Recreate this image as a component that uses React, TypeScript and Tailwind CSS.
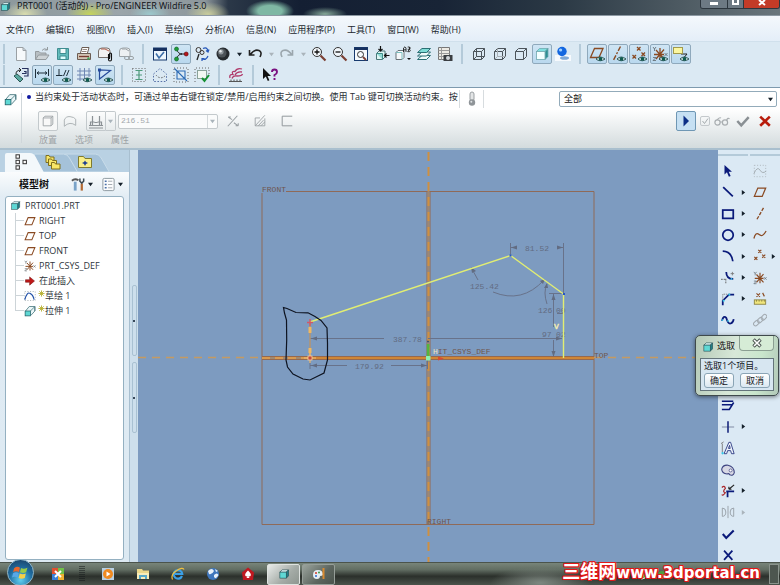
import React from 'react';
import clsx from 'clsx';

const navy = '#0a1a7a';
const brown = '#8a4a22';
const gray = '#9aa0a4';

const eye = (
  <g>
    <path d="M7 13 Q11 9 16 13 Q11 16.5 7 13Z" fill="#e8f4f2" stroke="#1d4a4a" strokeWidth="0.9" />
    <circle cx="11.5" cy="12.8" r="1.9" fill="#0f5a50" />
  </g>
);

const cube = (front: string, side: string) => (
  <g strokeWidth="0.8" stroke="#1f4a50">
    <path d="M2.5 5.5 L5.5 2.5 H14 L11 5.5Z" fill="#e9ffff" />
    <path d="M11 5.5 L14 2.5 V10.5 L11 13.5Z" fill={side} />
    <rect x="2.5" y="5.5" width="8.5" height="8" fill={front} />
  </g>
);

const wire = (
  <g fill="none" stroke="#4c545a">
    <path d="M2.5 5.5 H10.5 V13.5 H2.5Z M2.5 5.5 L5.5 2.5 H13.5 L10.5 5.5 M13.5 2.5 V10.5 L10.5 13.5" />
  </g>
);

const crosses = (
  <path d="M6 1 l3.5 3.5 m0 -3.5 l-3.5 3.5 M1.5 9 l3.5 3.5 m0 -3.5 l-3.5 3.5 M10.5 6.5 l3.5 3.5 m0 -3.5 l-3.5 3.5" fill="none" stroke={brown} strokeWidth="1.3" />
);

const csys = (
  <g fill="none" stroke={brown} strokeWidth="1.3">
    <path d="M2 8.5 H12 M8 2 V14 M4 4 L12 13 M12 3.5 L4 13" />
    <path d="M1 1 l1.5 2 l1.5 -2 M2.5 3 v2 M1 11.5 h3 l-3 3 h3 M12.5 7 l3 3 m0 -3 l-3 3" stroke="#5d646a" strokeWidth="0.8" />
  </g>
);

const icons: Record<string, React.ReactNode> = {
  cube: cube('#5fd8d4', '#1f7f86'),
  file: <path d="M3.5 1.5 H10 L13 4.5 V14.5 H3.5Z M10 1.5 V4.5 H13" fill="#f6f9fb" stroke={gray} />,
  open: (
    <g fill="#b8bfc3" stroke="#949b9f">
      <path d="M1.5 13.5 V5.5 H5 L6.5 7 H12 V9" />
      <path d="M1.5 13.5 L4.5 9 H15 L12 13.5Z" fill="#cdd3d6" />
      <path d="M8 4.5 Q10 1.5 13 3.5 M13.5 1 V4 H10.5" fill="none" />
    </g>
  ),
  save: (
    <g stroke="#3f8d90">
      <path d="M2.5 2.5 H13.5 V13.5 H2.5Z" fill="#62bcbc" />
      <path d="M5 2.5 H11 V7.5 H5Z" fill="#f1fbfb" />
      <path d="M5 10 H11 V13.5 H5Z" fill="#dff" />
    </g>
  ),
  print: (
    <g stroke="#6b5c52">
      <path d="M4.5 7 L6 1.5 H13 L11.5 7" fill="#fff" />
      <path d="M1.5 7.5 H14.5 V13.5 H1.5Z" fill="#d2c4b4" />
      <path d="M6.5 3.5 H11 M6 5.5 H10.5" strokeWidth="0.7" />
      <path d="M3 10.5 H13" stroke="#7b3c30" strokeWidth="1.3" />
      <circle cx="12.5" cy="12.5" r="1.2" fill="#3ba356" stroke="none" />
    </g>
  ),
  mailClip: (
    <g>
      <path d="M1.5 11.5 V5 Q1.5 2 5 2 H10 Q13 2 13 5 V11.5Z" fill="#f2f2f2" stroke="#77706c" />
      <path d="M4 3 Q8 2 12 5" stroke="#b05a48" fill="none" />
      <path d="M11.5 8 v5.5 a1.5 1.5 0 0 0 3 0 V8 a1 1 0 0 0 -2 0 v5" fill="none" stroke="#111" strokeWidth="1.1" />
    </g>
  ),
  mailLink: (
    <g fill="none" stroke="#9ba2a6">
      <path d="M1.5 10.5 V5 Q1.5 2 5 2 H9 Q12 2 12 5 V10.5Z" fill="#edf0f2" />
      <path d="M4 3 Q8 2 11 5" />
      <rect x="6.5" y="10.5" width="5" height="3" rx="1.5" />
      <rect x="10.5" y="10.5" width="5" height="3" rx="1.5" />
    </g>
  ),
  sketchWin: (
    <g>
      <rect x="1.5" y="2" width="13" height="12" fill="#eef6fd" stroke="#173a6e" />
      <path d="M1.5 2 H14.5 V5 H1.5Z" fill="#16305f" />
      <path d="M4 7.5 L7 12 L12 6" fill="none" stroke="#3d6ea8" strokeWidth="1.6" />
    </g>
  ),
  nodes: (
    <g>
      <path d="M3.5 3 Q5 8 9 8 Q5 8 3.5 13 M8 8 H13" fill="none" stroke="#222" />
      <circle cx="3.5" cy="3" r="2" fill="#1f9d3a" stroke="#0b5c1d" strokeWidth="0.6" />
      <circle cx="3.5" cy="13" r="2" fill="#1f9d3a" stroke="#0b5c1d" strokeWidth="0.6" />
      <circle cx="13.2" cy="8" r="2" fill="#b5161c" stroke="#600" strokeWidth="0.6" />
    </g>
  ),
  regen: (
    <g fill="none" stroke="#3a3430">
      <circle cx="4.5" cy="4" r="2.5" />
      <circle cx="8" cy="6.5" r="2" />
      <path d="M5 8 L3 14" stroke="#222" strokeWidth="1.3" />
      <path d="M9 2.5 Q13 0.5 14 5 M12 4.5 l2 1.5 l1 -2.5 M14 10 Q12 15 8 12.5 M8 15 v-2.5 h2.5" stroke="#2456b8" strokeWidth="1.2" />
    </g>
  ),
  ball: (
    <g>
      <circle cx="8" cy="8" r="6.5" fill="#24282c" />
      <circle cx="7" cy="7" r="4.5" fill="#4c5257" />
      <circle cx="6" cy="5.8" r="2.6" fill="#8e959a" />
      <circle cx="5.5" cy="5.2" r="1.2" fill="#e7eaec" />
    </g>
  ),
  undo: <path d="M3.5 8.5 Q7 3 12 4.5 Q15.5 6 13 11 M2.5 4 V9 H7.5" fill="none" stroke="#222" strokeWidth="1.6" />,
  redo: <path d="M12.5 8.5 Q9 3 4 4.5 Q0.5 6 3 11 M13.5 4 V9 H8.5" fill="none" stroke="#9ba6ad" strokeWidth="1.6" />,
  zoomIn: (
    <g fill="none">
      <circle cx="6" cy="6" r="4.5" stroke="#333" fill="#f2f7fb" />
      <path d="M3.5 6 H8.5 M6 3.5 V8.5" stroke="#111" strokeWidth="1.3" />
      <path d="M9.5 9.5 L14.5 14.5" stroke="#7a3f33" strokeWidth="2.2" />
    </g>
  ),
  zoomOut: (
    <g fill="none">
      <circle cx="6" cy="6" r="4.5" stroke="#333" fill="#f2f7fb" />
      <path d="M3.5 6 H8.5" stroke="#111" strokeWidth="1.3" />
      <path d="M9.5 9.5 L14.5 14.5" stroke="#7a3f33" strokeWidth="2.2" />
    </g>
  ),
  refit: (
    <g>
      <rect x="1.5" y="1.5" width="13" height="13" fill="#f5f9fc" stroke="#173a6e" />
      <path d="M1.5 1.5 H14.5 V4 H1.5Z" fill="#16305f" />
      <circle cx="7.5" cy="8.5" r="3" fill="none" stroke="#333" />
      <path d="M10 11 L13 14" stroke="#7a3f33" strokeWidth="1.8" />
    </g>
  ),
  reorient: (
    <g>
      <path d="M2.5 7.5 L5 5 H11 V11 L8.5 13.5 H2.5Z" fill="#dff6f4" stroke="#4b7779" />
      <path d="M2.5 7.5 H8.5 V13.5" fill="#8fdcd6" stroke="#3f8c88" />
      <path d="M6.5 0 V5 M4.5 3 L6.5 5 L8.5 3 M15.5 9.5 H10.5 M12.5 7.5 L10.5 9.5 L12.5 11.5" stroke="#111" fill="none" strokeWidth="1.2" />
    </g>
  ),
  views: (
    <g>
      <path d="M1 6.5 L3 4.5 H9 V11.5 L7 13.5 H1Z" fill="#f5f8fa" stroke="#687176" />
      <path d="M1 6.5 H7 V13.5" fill="none" stroke="#79bdbd" />
      <path d="M8.5 6 V2 L10 0.8 L11 2 V6 M8.5 3.8 H11 M12.7 1 H14.5 L15.3 2 L14.5 3.3 H12.7 M14.5 3.3 L15.3 4.5 L14.5 5.7 H12.7Z V1" fill="none" stroke="#222" strokeWidth="0.9" />
      <path d="M12 12 h4 l-2 2Z" fill="#111" />
    </g>
  ),
  layers: (
    <g stroke="#2b6f74" fill="#f1fbfb">
      <path d="M1.5 13.5 L6 9.5 H14.5 L10.5 13.5Z" />
      <path d="M1.5 10 L6 6 H14.5 L10.5 10Z" />
      <path d="M1.5 6.5 L6 2.5 H14.5 L10.5 6.5Z" fill="#7fdcd6" />
    </g>
  ),
  viewMgr: (
    <g>
      <path d="M1.5 1.5 H12.5 V13.5 H1.5Z" fill="#eceae4" stroke="#777" />
      <path d="M1.5 4.5 H12.5 M1.5 7.5 H12.5 M1.5 10.5 H12.5 M4.5 1.5 V13.5" stroke="#999" />
      <rect x="6.5" y="9" width="9" height="6" fill="#3a3e42" />
      <circle cx="11" cy="12" r="2" fill="#cfd4d8" />
    </g>
  ),
  wireframe: (
    <g>
      {wire}
      <path d="M5.5 2.5 V10.5 H13.5 M5.5 10.5 L2.5 13.5" fill="none" stroke="#4c545a" />
    </g>
  ),
  hidden: (
    <g>
      {wire}
      <path d="M5.5 2.5 V10.5 H13.5 M5.5 10.5 L2.5 13.5" fill="none" stroke="#a9b0b5" />
    </g>
  ),
  noHidden: wire,
  shaded: (
    <g strokeWidth="0.8" stroke="#6fa9ae">
      <path d="M2.5 5.5 L5.5 2.5 H14 L11 5.5Z" fill="#7fe0e0" />
      <path d="M11 5.5 L14 2.5 V10.5 L11 13.5Z" fill="#2d8f94" />
      <rect x="2.5" y="5.5" width="8.5" height="8" fill="#f2ffff" />
    </g>
  ),
  enhanced: (
    <g>
      <path d="M0 9 H16 V15 H0Z" fill="#f7fafd" />
      <ellipse cx="9.5" cy="12" rx="4.5" ry="1.8" fill="#7fa9d8" />
      <circle cx="7" cy="5.5" r="4.7" fill="#1266e0" />
      <circle cx="5.6" cy="4" r="1.6" fill="#9fd0ff" />
    </g>
  ),
  planeEye: (
    <g>
      <path d="M1.5 11.5 L5.5 2.5 H14 L10 11.5Z" fill="none" stroke={brown} strokeWidth="1.3" />
      {eye}
    </g>
  ),
  axisEye: (
    <g>
      <path d="M10.5 0.5 L3 15" stroke={brown} strokeWidth="1.4" strokeDasharray="5 1.5 2 1.5" />
      {eye}
    </g>
  ),
  pointEye: (
    <g>
      {crosses}
      {eye}
    </g>
  ),
  csysEye: (
    <g>
      {csys}
      {eye}
    </g>
  ),
  noteEye: (
    <g>
      <path d="M8 8 H14 L9 14" fill="none" stroke="#222" />
      <rect x="0.5" y="1.5" width="9" height="6" fill="#fbf7a0" stroke="#a29a4c" />
      {eye}
    </g>
  ),
  orient: (
    <g fill="none" stroke="#222">
      <path d="M9 1.5 H15 V9 H11 M11 4.5 H13 V6.5 H9" stroke="#26315e" strokeWidth="1.2" />
      <path d="M3 7 Q3 3 8 3 M6 1 L8 3 L6 5" />
      <path d="M1 9 L4 7 L10 12 L7 15Z" fill="#5aa8a0" stroke="#2b5552" />
    </g>
  ),
  dimEye: (
    <g>
      <path d="M1.5 2 V11 M14.5 2 V9 M3 6 H13 M5 4.5 L3 6 L5 7.5 M11 4.5 L13 6 L11 7.5" fill="none" stroke="#20303c" />
      {eye}
    </g>
  ),
  consEye: (
    <g>
      <path d="M4 2 V8 M1 8.5 H7.5 M11 3 L8.5 9 M14 3 L11.5 9" fill="none" stroke="#20303c" />
      {eye}
    </g>
  ),
  gridEye: (
    <g>
      <path d="M4 1 V14 M8.5 1 V14 M13 1 V10 M1 4 H15 M1 8 H15 M1 12 H8" stroke="#6f86b3" />
      {eye}
    </g>
  ),
  vertEye: (
    <g>
      <path d="M2.5 3 V12 L13.5 3.5Z" fill="#cfe3f6" stroke="#274a9a" strokeWidth="1.2" />
      <path d="M1 1.5 h3 v3 h-3Z" fill="#274a9a" />
      {eye}
    </g>
  ),
  dashI: (
    <g fill="none">
      <rect x="1.5" y="1.5" width="13" height="13" stroke="#666" strokeDasharray="1 2" />
      <path d="M4.5 3.5 H11.5 M4.5 12.5 H11.5 M8 4 V12 M5 8 H11" stroke="#4f9a7c" strokeWidth="1.2" />
    </g>
  ),
  dashArc: (
    <g fill="none">
      <path d="M1.5 7 L8 1.5 L14.5 7 V14.5 H1.5Z" stroke="#5872a8" strokeDasharray="1.6 1.6" />
      <path d="M4 8 Q8 13 13 9" stroke="#666" strokeDasharray="1.5 1.5" />
    </g>
  ),
  dashSq: (
    <g fill="none">
      <rect x="1" y="1" width="14" height="14" stroke="#666" strokeDasharray="1 2" />
      <path d="M4 4 H12 V12 H4Z M1.5 1.5 L14 14" stroke="#2a6ab5" strokeWidth="1.1" />
    </g>
  ),
  dashOk: (
    <g fill="none">
      <path d="M1 15 V1 H15 V8" stroke="#666" strokeDasharray="1 2" />
      <rect x="3.5" y="3.5" width="9" height="8" fill="#f2f8f2" stroke="#8aa39a" />
      <path d="M8 11 L10.5 14 L15 8" stroke="#169133" strokeWidth="2" />
    </g>
  ),
  spring: (
    <g fill="none">
      <path d="M2 11 Q1 7 5 7.5 Q3 4 7 4.5 Q9 0.5 14 2 M4 11.5 Q5 8.5 9 9 Q14 9 14.5 7 M7 8 Q9 4 14 5" stroke="#b03a6a" strokeWidth="1.3" />
      <path d="M1 14.5 H14 M3 12.5 V14.5 M6 12.5 V14.5 M9 12.5 V14.5 M12 12.5 V14.5" stroke="#555" />
    </g>
  ),
  whatsThis: (
    <g>
      <path d="M1 1 V12 L3.8 9.5 L5.8 14 L7.4 13.2 L5.5 9 H9Z" fill="#111" />
      <path d="M10 5 Q10 2.5 12.5 2.5 Q15 2.5 15 5 Q15 6.8 12.5 8 V9.5 M12.5 11 V13" fill="none" stroke="#7a1080" strokeWidth="1.9" />
    </g>
  ),
  extrude: (
    <g stroke="#3c6f76">
      <path d="M2 8 L7 2 H14.5 V8 L9 14" fill="#eaf6f8" />
      <path d="M8.5 8 L14 2.5 M14.5 8 L14.5 2" fill="none" />
      <rect x="1.5" y="8" width="7" height="6.5" fill="#5fd8d4" stroke="#1f5f66" />
    </g>
  ),
  solid: <path d="M2.5 4.5 L4.5 2.5 H13.5 V11.5 L11.5 13.5 H2.5Z M2.5 4.5 H11.5 V13.5 M11.5 4.5 L13.5 2.5" fill="#f8f8f8" stroke={gray} />,
  surface: <path d="M1.5 14 V7 Q3 2.5 8 3 Q13 3.5 14.5 6 V13 Q8 8 1.5 14Z" fill="none" stroke="#a5abae" />,
  depth: <path d="M1 12.5 H15 M4.5 12 V3 M2.5 12 V9 H6.5 M11.5 12 V3 M13.5 12 V9 H9.5 M6.5 9.5 H9.5 M1 15 H15" fill="none" stroke="#8b9195" strokeWidth="1.2" />,
  flip: <path d="M2 14 L13 2 M2.5 3.5 L7 6.5 M2.5 3.5 L5.5 3.5 M9 10 L14 13.5 M14 13.5 V10.5 M14 13.5 H11" fill="none" stroke={gray} strokeWidth="1.2" />,
  cut: <path d="M2.5 13.5 V4.5 H8 M13.5 1.5 L2.5 13.5 H13.5 V5 M6 13.5 L12 7 M9 13.5 L13.5 9" fill="none" stroke={gray} />,
  thicken: <path d="M14 2.5 H2.5 V13.5 H14" fill="none" stroke="#8f9599" strokeWidth="1.1" />,
  thermo: (
    <g>
      <rect x="6" y="1" width="4" height="9" rx="2" fill="#e3e5e6" stroke="#9ba0a3" />
      <circle cx="8" cy="11.5" r="3.2" fill="#8f9498" />
      <circle cx="7.3" cy="10.8" r="1" fill="#dfe2e4" />
    </g>
  ),
  play: <path d="M5.5 2.5 L11 8 L5.5 13.5Z" fill="#0c2f86" />,
  glasses: (
    <g fill="none" stroke="#a9aeb1" strokeWidth="1.2">
      <circle cx="3.5" cy="9.5" r="2.6" />
      <circle cx="11" cy="9.5" r="2.6" />
      <path d="M6 9 H8.4 M3 7 Q5 4 7 5 M12.5 7.5 Q14 4 15.5 6" />
    </g>
  ),
  okGray: <path d="M1.5 8 L6 13 L14.5 3.5" fill="none" stroke="#8a9094" strokeWidth="2.8" />,
  cancel: <path d="M2.5 3 L13.5 13.5 M13.5 3 L2.5 13.5" fill="none" stroke="#b81c0c" strokeWidth="3" />,
  treeTab: (
    <g fill="#fff" stroke="#333">
      <rect x="3" y="0.8" width="3.4" height="3.4" />
      <rect x="3" y="6.3" width="3.4" height="3.4" />
      <rect x="3" y="11.8" width="3.4" height="3.4" />
      <rect x="10" y="6.3" width="3.4" height="3.4" />
    </g>
  ),
  folders: (
    <g fill="#f8e668" stroke="#7f6f1e">
      <path d="M1 1.5 h3 l1 1.5 h4 v5.5 H1Z" />
      <path d="M3.5 5 h3 l1 1.5 h4 v5 H3.5Z" />
      <path d="M6.5 8.5 h3 l1 1.5 h4.5 v5 H6.5Z" />
    </g>
  ),
  favorites: (
    <g>
      <path d="M1.5 2.5 H6.5 L8 4.5 H14.5 V13.5 H1.5Z" fill="#f8ee88" stroke="#7f7a2e" />
      <path d="M8 6.5 L9 8 L11 9 L9 10 L8 12 L7 10 L5 9 L7 8Z" fill="#1f3f8f" />
    </g>
  ),
  tools: (
    <g fill="none">
      <path d="M4.5 5 V14.5" stroke="#7aa3c8" strokeWidth="3" />
      <path d="M1 4 Q4 1 8 3.5" stroke="#555" strokeWidth="2" />
      <path d="M11.5 7 V14.5" stroke="#b36a34" strokeWidth="2.4" />
      <path d="M9.5 1.5 V4.5 L11.5 6.5 L13.5 4.5 V1.5" stroke="#39464f" strokeWidth="1.6" />
    </g>
  ),
  list: (
    <g>
      <rect x="2" y="1.5" width="12" height="13" rx="1.5" fill="#fbfcfd" stroke="#8c979e" />
      <path d="M4 4.5 h2 M4 8 h2 M4 11.5 h2" stroke="#4a70a8" strokeWidth="1.6" />
      <path d="M7.5 4.5 H12 M7.5 8 H12 M7.5 11.5 H12" stroke="#a0a8ad" />
    </g>
  ),
  plane: <path d="M1.5 13 L5.5 3.5 H14.5 L10.5 13Z" fill="none" stroke={brown} strokeWidth="1.4" />,
  csys,
  insert: <path d="M2 6.3 H7.5 V2.5 L14 8 L7.5 13.5 V9.7 H2Z" fill="#c01818" stroke="#6f0c0c" strokeWidth="0.7" />,
  sketch: (
    <g fill="none">
      <rect x="1" y="2" width="14" height="12" stroke="#9aa5ad" strokeDasharray="1.5 2" />
      <path d="M1 13 Q4 2 8 4.5 Q12 6 13.5 13" stroke="#1f4fa8" strokeWidth="1.5" />
    </g>
  ),
  star: <path d="M8 1 V15 M1 8 H15 M3 3 L13 13 M13 3 L3 13" stroke="#b5ae2c" strokeWidth="2" />,
  arrow: <path d="M4 1 V12 L6.8 9.5 L9 14.5 L11 13.6 L8.8 8.8 H12.5Z" fill={navy} />,
  line: <path d="M2.5 2.5 L13.5 13" stroke={navy} strokeWidth="2" />,
  rect: <rect x="2" y="3.5" width="12" height="9.5" fill="none" stroke={navy} strokeWidth="2" />,
  circle: <circle cx="8" cy="8" r="6" fill="none" stroke={navy} strokeWidth="2" />,
  arc: <path d="M2 2.5 Q12 3 13.5 14" fill="none" stroke={navy} strokeWidth="2" />,
  fillet: (
    <g fill="none">
      <path d="M6 1 Q6 9 14 9" stroke={navy} strokeWidth="2" />
      <path d="M0 9.5 H6 M5.5 9 V15" stroke="#555" strokeDasharray="2 1" />
      <path d="M11 3 h4 M13 1 v4" stroke="#777" />
      <circle cx="12" cy="9" r="1" fill="#37c8e8" />
    </g>
  ),
  chamfer: (
    <g fill="none">
      <path d="M2 15 V10 L9 3 H15" stroke={navy} strokeWidth="2" />
      <path d="M2 9 V2.5 H8" stroke="#777" strokeDasharray="1.5 1" />
      <circle cx="3" cy="10" r="1.2" fill="#37c8e8" />
      <circle cx="9.5" cy="3" r="1.2" fill="#37c8e8" />
    </g>
  ),
  spline: (
    <g fill="none">
      <path d="M1 9 Q3 2 6 5.5 Q8 13 11 12 Q14 11 14.5 7" stroke={navy} strokeWidth="2" />
      <circle cx="1.5" cy="8" r="1" fill="#37c8e8" />
      <circle cx="8" cy="9" r="1" fill="#37c8e8" />
    </g>
  ),
  edge: <path d="M1 2.5 H14 M1 6.5 H13 M14.5 4 L9.5 12 H1" fill="none" stroke={navy} strokeWidth="1.8" />,
  dimension: (
    <g>
      <path d="M1 8 H15" stroke="#8490a8" strokeWidth="1.2" />
      <path d="M8 1.5 V14.5" stroke="#16257c" strokeWidth="1.8" />
    </g>
  ),
  textA: (
    <g fill="none">
      <path d="M3.5 14.5 L9 1.5 H11 L15 14.5 H12 L11 11 H7.5 L6.5 14.5Z M8.5 8.5 H10.5 L9.8 5Z" fill="#eef4fb" stroke="#27357f" />
      <path d="M1.5 3 V13 M0 3 L3 1" stroke="#777" />
      <circle cx="1.8" cy="14" r="1.3" fill="#37c8e8" />
    </g>
  ),
  palette: (
    <g>
      <path d="M0.8 7 Q2 2 8 2.5 Q15 4 15.2 11 Q14 15 10 13.5 Q9 11.5 7 12.5 Q1 12 0.8 7Z" fill="#d7d8e4" stroke="#3c4380" strokeWidth="1.2" />
      <circle cx="11" cy="8.5" r="1.7" fill="#fff" stroke="#3c4380" strokeWidth="0.8" />
    </g>
  ),
  trim: (
    <g fill="none">
      <path d="M1 4 Q4 1 5 5 Q1 9 5 10 Q2 14 1 12" stroke="#a8262a" strokeWidth="1.4" />
      <path d="M6 8.5 H15 M7.5 8.5 V15" stroke={navy} strokeWidth="2" />
      <path d="M15 1 L9 6 M9 6 V3 M9 6 H12" stroke="#222" strokeWidth="1.3" />
    </g>
  ),
  mirror: <path d="M1.5 3.5 Q5.5 3.5 5.5 8 Q5.5 13 1.5 13Z M14.5 3.5 Q10.5 3.5 10.5 8 Q10.5 13 14.5 13Z M8 1 V15" fill="none" stroke="#949ca2" />,
  done: <path d="M2 8 L6 12.5 L14.5 4" fill="none" stroke={navy} strokeWidth="2.4" />,
  quit: <path d="M3.5 3 L13 13.5 M13 3 L3.5 13.5" fill="none" stroke={navy} strokeWidth="2" />,
  sketchGray: (
    <g fill="none">
      <rect x="1.5" y="1.5" width="13" height="13" stroke="#adb5ba" strokeDasharray="1.2 2" />
      <path d="M1 11 Q5 2 8 7 Q11 12 15 8" stroke="#9fa7ac" />
    </g>
  ),
  axis: <path d="M12 1 L4 15" stroke={brown} strokeWidth="1.5" strokeDasharray="4 1.5" />,
  curve: <path d="M1 12 Q3 4 7 7.5 Q11 11 15 3.5" fill="none" stroke={brown} strokeWidth="1.4" />,
  points: crosses,
  ruler: (
    <g>
      <path d="M4 1.5 l4 4 m0 -4 l-4 4 M11 1 l2 4" stroke={brown} strokeWidth="1.3" />
      <rect x="1.5" y="9" width="13" height="5" fill="#f0e57c" stroke="#8a8240" />
      <path d="M4 9 v2 M7 9 v2 M10 9 v2 M13 9 v2" stroke="#8a8240" />
    </g>
  ),
  chain: (
    <g fill="none" stroke="#a2aab0" strokeWidth="1.2">
      <rect x="0" y="9" width="7" height="4.5" rx="2" transform="rotate(-45 4 11)" />
      <rect x="4.5" y="6" width="7" height="4.5" rx="2" transform="rotate(-45 8 8)" />
      <rect x="9" y="3" width="7" height="4.5" rx="2" transform="rotate(-45 12 5)" />
    </g>
  ),
};

const Icon = ({ name, className }: { name: string; className?: string }) => (
  <svg viewBox="0 0 16 16" className={clsx('shrink-0', className ?? 'w-4 h-4')} aria-hidden="true">
    {icons[name]}
  </svg>
);

const Caret = ({ dim, right }: { dim?: boolean; right?: boolean }) => (
  <svg viewBox="0 0 6 6" className="w-[5px] h-[5px] shrink-0" aria-hidden="true">
    <path d={right ? 'M1 0 L5 3 L1 6Z' : 'M0 1 H6 L3 5Z'} fill={dim ? '#aab4bb' : '#15202a'} />
  </svg>
);

// "name" is a plain button, "name*" a pressed one, "v" / "v-" a menu arrow
const topRow = [
  ['file', 'open', 'save', 'print', 'mailClip', 'mailLink'],
  ['sketchWin', 'nodes*', 'regen', 'ball', 'v', 'undo', 'v-', 'redo', 'v-', 'zoomIn', 'zoomOut', 'refit', 'reorient', 'views', 'layers', 'viewMgr'],
  ['wireframe', 'hidden', 'noHidden', 'shaded*', 'enhanced'],
  ['planeEye*', 'axisEye*', 'pointEye*', 'csysEye*', 'noteEye*'],
];

const bottomRow = [
  ['orient', 'dimEye*', 'consEye*', 'gridEye', 'vertEye*'],
  ['dashI', 'dashArc', 'dashSq', 'dashOk'],
  ['spring'],
  ['whatsThis'],
];

const menus = ['文件(F)', '编辑(E)', '视图(V)', '插入(I)', '草绘(S)', '分析(A)', '信息(N)', '应用程序(P)', '工具(T)', '窗口(W)', '帮助(H)'];

const tree = [
  { icon: 'plane', label: 'RIGHT' },
  { icon: 'plane', label: 'TOP' },
  { icon: 'plane', label: 'FRONT' },
  { icon: 'csys', label: 'PRT_CSYS_DEF' },
  { icon: 'insert', label: '在此插入' },
  { icon: 'sketch', label: '草绘 1', fresh: true },
  { icon: 'extrude', label: '拉伸 1', fresh: true },
];

// left icon, left arrow, right icon, right arrow
const sketcher = [
  ['arrow', '', 'sketchGray', ''],
  ['line', 'v', 'plane', ''],
  ['rect', 'v', 'axis', ''],
  ['circle', 'v', 'curve', ''],
  ['arc', 'v', 'points', 'v'],
  ['fillet', 'v', 'csys', ''],
  ['chamfer', 'v', 'ruler', ''],
  ['spline', '', 'chain', ''],
  ['points', '', '', ''],
  ['edge', '', '', ''],
  ['edge', '', '', ''],
  ['edge', '', '', ''],
  ['dimension', 'v', '', ''],
  ['textA', '', '', ''],
  ['palette', '', '', ''],
  ['trim', 'v', '', ''],
  ['mirror', 'v-', '', ''],
  ['done', '', '', ''],
  ['quit', '', '', ''],
];

const ToolRow = ({ groups }: { groups: string[][] }) => (
  <div className="flex gap-[6px] pl-[3px]">
    {groups.map((group, i) => (
      <div key={i} className="flex gap-[6px]">
        <div className="w-[2px] bg-[#b4cad9]" />
        <div className="flex gap-px">
          {group.map((item, j) =>
            item[0] === 'v' && item.length < 3 ? (
              <button key={j} aria-label="More" className="w-[10px] h-5 flex items-center justify-center">
                <Caret dim={item === 'v-'} />
              </button>
            ) : (
              <button
                key={j}
                aria-label={item.replace('*', '')}
                className={clsx(
                  'w-5 h-5 flex items-center justify-center rounded-[2px] border',
                  item.endsWith('*') ? 'border-[#8fa9bc] bg-[linear-gradient(#cfe5f4,#b9d8ee)]' : 'border-transparent'
                )}
              >
                <Icon name={item.replace('*', '')} />
              </button>
            )
          )}
        </div>
      </div>
    ))}
  </div>
);

const TitleBar = () => (
  <header className="h-4 shrink-0 flex items-start justify-between border-b border-[#8d99a3] bg-[radial-gradient(ellipse_22px_12px_at_25px_14px,#d8dcae,transparent),radial-gradient(ellipse_24px_12px_at_90px_14px,#c4d45c,transparent),radial-gradient(ellipse_20px_10px_at_150px_14px,#9cc8cc,transparent),radial-gradient(ellipse_22px_12px_at_208px_14px,#c8cc9c,transparent),radial-gradient(ellipse_24px_11px_at_270px_11px,#7fb8a4,#7fb8a4_50%,transparent),radial-gradient(ellipse_22px_7px_at_325px_14px,#86a898,transparent),linear-gradient(90deg,#8c989c_0,#9ba5aa_120px,#8d979c_205px,#2b3848_228px,#141f33_300px,#182436_440px,#2b3945_560px,#4d5a62_680px,#6a767c_100%)]">
    <div className="flex items-center gap-[6px] h-3">
      <Icon name="cube" className="w-[11px] h-[11px]" />
      <h1 className="text-[9px] leading-3 text-[#0c1014] whitespace-nowrap">PRT0001 (活动的) - Pro/ENGINEER Wildfire 5.0</h1>
    </div>
    <div className="flex h-[9px] text-white border border-t-0 border-[#2c363e] rounded-b-[3px] overflow-hidden">
      <button aria-label="Minimize" className="w-[27px] flex items-start justify-center bg-[#6d7a84] border-r border-[#2c363e] pt-[2px]">
        <span className="w-2 h-[3px] bg-white" />
      </button>
      <button aria-label="Restore" className="w-4 flex items-start justify-center bg-[#6d7a84] border-r border-[#2c363e]">
        <span className="w-[7px] h-[5px] border-2 border-t-0 border-white" />
      </button>
      <button aria-label="Close" className="w-[35px] flex items-start justify-center bg-[#c33b27]">
        <svg viewBox="0 0 8 6" className="w-2 h-[6px]">
          <path d="M1 0 L7 5 M7 0 L1 5" stroke="#fff" strokeWidth="2" />
        </svg>
      </button>
    </div>
  </header>
);

const Dashboard = () => (
  <section className="h-[63px] shrink-0 flex border-t border-[#7e9aae] border-b-2 border-b-[#a9bfce] bg-[linear-gradient(#fff_0,#fff_35%,#d3dbdd_100%)]">
    <div className="w-[22px] my-[5px] pl-1 border-r border-[#cfd6da]">
      <Icon name="extrude" className="w-[13px] h-[13px]" />
    </div>
    <div className="flex-1 min-w-0">
      <div className="flex items-center h-[22px] pr-[3px]">
        <p className="flex items-center w-[437px] pl-[5px] pb-1 text-[9px] leading-3 text-[#2a2f34] whitespace-nowrap">
          <span className="w-1 h-1 mr-1 rounded-full bg-[#1018a0] shrink-0" />
          当约束处于活动状态时，可通过单击右键在锁定/禁用/启用约束之间切换。使用 Tab 键可切换活动约束。按
        </p>
        <div className="w-[25px] h-[18px] flex items-center justify-center border-x border-[#d7dcdf]">
          <Icon name="thermo" />
        </div>
        <div className="relative ml-auto">
          <select
            aria-label="Filter"
            defaultValue="all"
            className="block appearance-none w-[218px] h-4 pl-1 rounded-[2px] border border-[#93abba] bg-white text-[9px] leading-[14px] text-[#111]"
          >
            <option value="all">全部</option>
          </select>
          <span className="absolute inset-y-0 right-1 flex items-center pointer-events-none">
            <Caret />
          </span>
        </div>
      </div>
      <div className="flex items-center h-[21px] pt-px pl-4 pr-2">
        <button aria-label="Solid" className="w-5 h-5 flex items-center justify-center rounded-[2px] border border-[#c3c9cc] bg-[#f6f7f7]">
          <Icon name="solid" className="w-[14px] h-[14px]" />
        </button>
        <button aria-label="Surface" className="w-5 h-5 ml-[2px] flex items-center justify-center">
          <Icon name="surface" className="w-[14px] h-[14px]" />
        </button>
        <button aria-label="Depth" className="w-5 h-5 ml-[6px] flex items-center justify-center rounded-l-[2px] border border-[#c3c9cc]">
          <Icon name="depth" />
        </button>
        <button aria-label="Depth options" className="w-[10px] h-5 flex items-center justify-center rounded-r-[2px] border border-l-0 border-[#c3c9cc]">
          <Caret dim />
        </button>
        <div className="flex ml-[2px] h-[15px] rounded-[2px] border border-[#c3c9cc] bg-[#fafbfb]">
          <input
            aria-label="Depth value"
            defaultValue="216.51"
            className="w-[88px] pl-[2px] bg-transparent font-['Liberation_Mono',monospace] text-[8px] text-[#a3a9ac] outline-none"
          />
          <button aria-label="Recent values" className="w-[10px] flex items-center justify-center border-l border-[#d3d8da]">
            <Caret dim />
          </button>
        </div>
        <div className="flex items-center gap-[13px] ml-2">
          {['flip', 'cut', 'thicken'].map((name) => (
            <button key={name} aria-label={name}>
              <Icon name={name} className="w-[14px] h-[14px]" />
            </button>
          ))}
        </div>
        <div className="flex items-center ml-auto">
          <button aria-label="Resume" className="w-5 h-5 flex items-center justify-center rounded-[2px] border border-[#6f97b4] bg-[#c6e0f3]">
            <Icon name="play" />
          </button>
          <span className="relative flex ml-1">
            <input type="checkbox" defaultChecked aria-label="Preview on" className="appearance-none w-[10px] h-[10px] rounded-[2px] border border-[#c4c9cc]" />
            <svg viewBox="0 0 10 10" className="absolute inset-0 pointer-events-none">
              <path d="M2.5 5 L4.5 7.5 L8 2.5" fill="none" stroke="#a5abae" />
            </svg>
          </span>
          <button aria-label="Preview" className="ml-1">
            <Icon name="glasses" />
          </button>
          <button aria-label="Accept" className="ml-[6px]">
            <Icon name="okGray" className="w-[14px] h-[14px]" />
          </button>
          <button aria-label="Cancel" className="ml-2">
            <Icon name="cancel" className="w-[14px] h-[14px]" />
          </button>
        </div>
      </div>
      <nav className="flex gap-[18px] pl-[17px] pt-px text-[9px] leading-4 text-[#9da3a6]">
        <button>放置</button>
        <button>选项</button>
        <button>属性</button>
      </nav>
    </div>
  </section>
);

const ModelTree = () => (
  <aside className="w-[138px] shrink-0 flex bg-[#cddfec]">
    <div className="w-[130px] flex flex-col border-r border-[#a8bfd0] bg-[linear-gradient(#e3edf5,#dce9f2)]">
      <div className="relative h-[22px] shrink-0 bg-[#b9d1e3]">
        <svg viewBox="0 0 130 22" className="absolute inset-0 w-full h-full" aria-hidden="true">
          <path d="M64 22 V6 Q64 4 66 4 H96 Q100 4 102 8 L110 22Z" fill="#a5c2d9" stroke="#c9dce9" />
          <path d="M34 22 V6 Q34 4 36 4 H64 Q68 4 70 8 L78 22Z" fill="#a5c2d9" stroke="#c9dce9" />
          <path d="M5 22 V5 Q5 3 7 3 H30 Q34 3 36 7 L44 22Z" fill="#f3f8fb" />
        </svg>
        <div className="relative flex gap-4 pl-[13px] pt-1">
          <button aria-label="Model tree"><Icon name="treeTab" /></button>
          <button aria-label="Folders"><Icon name="folders" /></button>
          <button aria-label="Favorites"><Icon name="favorites" /></button>
        </div>
      </div>
      <div className="flex items-center h-6 shrink-0 pl-[19px] bg-[linear-gradient(#fafcfd,#e3edf4)]">
        <h2 className="w-[52px] text-[10px] leading-4 font-bold text-[#111]">模型树</h2>
        <button aria-label="Settings" className="flex items-center gap-[2px]">
          <Icon name="tools" className="w-[15px] h-[15px]" />
          <Caret />
        </button>
        <button aria-label="Show" className="flex items-center gap-[2px] ml-2">
          <Icon name="list" className="w-[15px] h-[15px]" />
          <Caret />
        </button>
      </div>
      <div className="flex-1 mx-[5px] mb-[2px] pt-px pl-1 rounded-[3px] border border-[#94b0c1] bg-white text-[9px] text-[#2f363c]">
        <div className="flex items-center gap-1 h-[15px]">
          <Icon name="cube" className="w-[11px] h-[11px]" />
          PRT0001.PRT
        </div>
        <ul className="ml-[5px]">
          {tree.map((node, i) => (
            <li key={node.label} className="flex items-center h-[15px]">
              <span className={clsx('w-px bg-[#cdd4d8]', i === tree.length - 1 ? 'h-2 self-start' : 'h-[15px]')} />
              <span className="w-2 h-px bg-[#cdd4d8]" />
              <Icon name={node.icon} className="w-3 h-3" />
              {node.fresh && <Icon name="star" className="w-[7px] h-[7px] ml-[2px] mb-1" />}
              <span className={clsx('whitespace-nowrap', !node.fresh && 'ml-[3px]')}>{node.label}</span>
            </li>
          ))}
        </ul>
      </div>
    </div>
    <div className="flex-1 flex flex-col items-center gap-[6px] pt-[135px]">
      {[0, 1].map((n) => (
        <div key={n} className="w-[5px] h-[71px] flex items-center justify-center rounded-[2px] border border-[#a9c1d2]">
          <span className="w-[2px] h-[2px] bg-[#38485a]" />
        </div>
      ))}
    </div>
  </aside>
);

const Canvas = () => (
  <main className="flex-1 min-w-0 bg-[#7d9bc0]">
    <svg viewBox="138 150 580 412" className="w-full h-full font-['Liberation_Mono',monospace] text-[8px]">
      <g fill="none" stroke="#8f6a58">
        <path d="M286 191.5 H594 V524.5 H262 V193" />
        <path d="M427 191 V524 M430 191 V524 M262 356.5 H594 M262 359.5 H594" stroke="#96694e" />
        <path d="M310 358 H594" stroke="#cf8636" strokeWidth="2" />
        <path d="M262 358 H310 M428.5 191 V524" stroke="#a08870" strokeWidth="2" />
      </g>
      <path d="M428.5 152 V562" stroke="#cf9040" strokeWidth="2" strokeDasharray="9 6" />
      <path d="M138 357.5 H262 M594 357.5 H718" stroke="#c59a62" strokeWidth="1.3" strokeDasharray="8 6" />
      <path d="M262 358 H310" stroke="#d89a50" strokeWidth="2" strokeDasharray="8 5" />

      <g fill="#6f564e">
        <text x="262" y="192">FRONT</text>
        <text x="594" y="358">TOP</text>
        <text x="427" y="524">RIGHT</text>
        <text x="433" y="354"><tspan fill="#f0e6c0">H</tspan>IT_CSYS_DEF</text>
      </g>

      <g fill="none" stroke="#68728a">
        <path d="M310 338.5 H384 M428 338.5 H562 M310 365.5 H347 M391 365.5 H427 M310 360 V369 M427.5 360 V369" />
        <path d="M510.5 243 V255 M563.5 243 V294 M511 247.5 H517 M557 247.5 H563" />
        <path d="M472 269 L478 280 M493 292 Q522 304 544 280 M547 284 Q543 292 547 304" />
        <path d="M553.5 294 V327 M553.5 340 V356 M549 293.5 H563 M557 313.5 H564" />
      </g>
      <g fill="#626c82">
        <path d="M311 338.5 l6 -2 v4Z M562 338.5 l-6 -2 v4Z M311 365.5 l6 -2 v4Z M427 365.5 l-6 -2 v4Z" />
        <path d="M511 247.5 l6 -2 v4Z M563 247.5 l-6 -2 v4Z M553.5 294 l-2 6 h4Z M553.5 357 l-2 -6 h4Z" />
        <path d="M471 267 l5 4 l-4 2Z M545 279 l-5 2 l3 3Z M547 283 l-3 5 l4 0Z" />
        <text x="393" y="342">387.78</text>
        <text x="355" y="369">179.92</text>
        <text x="525" y="251">81.52</text>
        <text x="470" y="289">125.42</text>
        <text x="538" y="313">126</text>
        <text x="556" y="313">00</text>
        <text x="542" y="337">97</text>
        <text x="556" y="337">02</text>
      </g>
      <text x="554" y="329" fill="#f6eeb0" stroke="#f6eeb0" strokeWidth="0.4">V</text>

      <path d="M310 322 L510.5 255.5 L563.5 294 V358" fill="none" stroke="#e2ee72" strokeWidth="1.4" />
      <path d="M509.5 254.5 h2 v2 h-2Z M563 293 h2 v2 h-2Z" fill="#2456c8" />

      <path d="M310 323 V358" stroke="#b8946c" strokeWidth="1.4" />
      <path d="M310 327 V333 M310 348 V353" stroke="#f0b860" strokeWidth="3" />
      <path d="M307 322.5 H313 M310 319 V326" stroke="#d05868" strokeWidth="1.4" />
      <path d="M304 358 H316 M310 353 V363" stroke="#f0c078" strokeWidth="1.2" />
      <rect x="308" y="356" width="4" height="4" fill="#c84838" stroke="#f4d0a0" strokeWidth="0.8" />

      <rect x="426.8" y="344" width="2.6" height="12" fill="#55b53c" />
      <rect x="426" y="356" width="4.5" height="4.5" fill="#8ef0b0" />
      <path d="M438 356.5 L444 358.5 L438 360.5Z" fill="#d84a30" />
      <path d="M427 341.5 h2" stroke="#44506c" strokeWidth="1.4" />

      <path
        d="M283.5 307.5 L287 308.5 L296 312.5 L308 312.8 L315 316.5 L321 320.5 L327 328 L327.5 343 L327.5 360 L324 373 L317 376.5 L310 380 L303 379 L293 374 L287.5 367 L286 360 L286.7 340 L286.5 320 L284.5 313Z"
        fill="none"
        stroke="#0d1320"
        strokeWidth="1.2"
      />
    </svg>
  </main>
);

const SketcherBar = () => (
  <aside className="w-[62px] shrink-0 flex flex-col bg-[#dbe9f4]">
    <div className="flex gap-[2px] pt-1">
      <div className="flex-1 h-[2px] bg-[#b4cad9]" />
      <div className="flex-1 h-[2px] bg-[#b4cad9]" />
    </div>
    <div className="flex-1 flex flex-col justify-between pt-2 pl-[3px]">
      {sketcher.map(([left, leftMenu, right, rightMenu], i) => (
        <div key={i} className="flex items-center h-[14px]">
          <button aria-label={left}>
            <Icon name={left} className="w-[14px] h-[14px]" />
          </button>
          <span className="w-4 flex justify-center">{leftMenu && <Caret right dim={leftMenu === 'v-'} />}</span>
          {right && (
            <button aria-label={right} className="ml-[2px]">
              <Icon name={right} className="w-[14px] h-[14px]" />
            </button>
          )}
          {rightMenu && (
            <span className="w-3 flex justify-center">
              <Caret right />
            </span>
          )}
        </div>
      ))}
    </div>
  </aside>
);

const SelectDialog = () => (
  <div
    role="dialog"
    aria-label="选取"
    className="absolute right-px top-[185px] w-[84px] px-1 pb-1 rounded-[5px] border border-[#3f4a4c] bg-[linear-gradient(100deg,#b4c8b6,#d8e8d8_45%,#c9e6cc_75%,#b2c8b8)] shadow-[0_1px_4px_rgba(0,0,0,0.5)]"
  >
    <div className="flex items-start h-[22px]">
      <Icon name="cube" className="w-3 h-3 ml-[2px] mt-[5px]" />
      <h2 className="ml-[3px] mt-1 text-[9px] leading-3 text-[#111]">选取</h2>
      <button aria-label="Close" className="ml-auto w-[35px] h-[15px] flex items-center justify-center rounded-b-[4px] border border-t-0 border-[#8b9f92] bg-[#d6ecd6]">
        <svg viewBox="0 0 10 10" className="w-[10px] h-[10px]">
          <path d="M1.5 1.5 L8.5 8.5 M8.5 1.5 L1.5 8.5" stroke="#4a5450" strokeWidth="3.4" />
          <path d="M2 2 L8 8 M8 2 L2 8" stroke="#fff" strokeWidth="1.6" />
        </svg>
      </button>
    </div>
    <div className="px-[3px] pb-[2px] border border-[#64747a] bg-[#d7e6f1] text-[9px] text-[#14181c]">
      <p className="leading-[14px] whitespace-nowrap">选取1个项目。</p>
      <div className="flex justify-between">
        {['确定', '取消'].map((label) => (
          <button key={label} className="w-[30px] h-[15px] rounded-[3px] border border-[#8aa4b5] bg-[linear-gradient(#fff,#dbe8f1)] leading-[13px]">
            {label}
          </button>
        ))}
      </div>
    </div>
  </div>
);

const Taskbar = () => (
  <footer className="relative h-[23px] shrink-0 flex items-center border-t border-[#4b544c] bg-[radial-gradient(ellipse_50px_16px_at_540px_20px,#7d8780,transparent),linear-gradient(#78857a_0,#626e63_30%,#2b302b_60%,#4a534b_100%)]">
    <button aria-label="Start" className="ml-[7px] -mt-[3px] w-[27px] h-[27px] rounded-full border border-[#8fb8cc] bg-[radial-gradient(circle_at_50%_80%,#5fd0f0,#1f6ca0_50%,#1b3a5c)] flex items-center justify-center">
      <svg viewBox="0 0 16 16" className="w-[17px] h-[17px]">
        <path d="M2 4 Q5 1.5 7.5 3.5 L6.5 7.5 Q4 6 1 7.5Z" fill="#e8662c" />
        <path d="M8.5 3.8 Q11 5.3 14.5 3.6 L13.3 7.8 Q10.5 9 7.5 7.7Z" fill="#9acb48" />
        <path d="M1 8.7 Q4 7 6.3 8.8 L5.2 12.8 Q2.8 11.3 0 12.7Z" fill="#58a8e8" />
        <path d="M7.3 9 Q10 10.5 13 9 L12 13.2 Q9 14.5 6.2 13.2Z" fill="#f8d048" />
      </svg>
    </button>
    <div className="flex items-center ml-[17px]">
      <button aria-label="Desktop">
        <svg viewBox="0 0 14 14" className="w-[14px] h-[14px]">
          <path d="M1 1h6v6H1Z" fill="#e05030" />
          <path d="M7 1h6v6H7Z" fill="#70c048" />
          <path d="M1 7h6v6H1Z" fill="#3a80d8" />
          <path d="M7 7h6v6H7Z" fill="#f0b030" />
          <path d="M4 4l6 6M10 4l-6 6" stroke="#fff" strokeWidth="2" />
        </svg>
      </button>
      <svg viewBox="0 0 6 16" className="w-[6px] h-4 ml-[14px] mr-[16px]" aria-hidden="true">
        <path d="M1 0V16M3 0V16M5 0V16" stroke="#14181a" strokeDasharray="1 1" />
      </svg>
      <div className="flex gap-[21px]">
        <button aria-label="Media player">
          <svg viewBox="0 0 14 14" className="w-[14px] h-[14px]">
            <rect x="1" y="1" width="12" height="12" fill="#b8cfe2" />
            <circle cx="7" cy="7" r="5" fill="#f08a20" />
            <path d="M5.5 4.5L9.5 7L5.5 9.5Z" fill="#fff" />
          </svg>
        </button>
        <button aria-label="Explorer">
          <svg viewBox="0 0 14 14" className="w-[14px] h-[14px]">
            <path d="M1 2h5l1 1.5h6V12H1Z" fill="#ecd88a" />
            <path d="M1 6h12v6H1Z" fill="#f8ecb8" />
            <path d="M4 12V9h6v3" fill="none" stroke="#58a8c8" strokeWidth="2" />
          </svg>
        </button>
        <button aria-label="Browser">
          <svg viewBox="0 0 14 14" className="w-[14px] h-[14px]">
            <path d="M11 9 A4.3 4.3 0 1 1 11.3 7 H4" fill="none" stroke="#3aa0e8" strokeWidth="2.2" />
            <path d="M1.5 12.5 Q-0.5 8 5 4 Q12 -0.5 13 2.5" fill="none" stroke="#f0c040" strokeWidth="1.2" />
          </svg>
        </button>
        <button aria-label="Globe">
          <svg viewBox="0 0 14 14" className="w-[14px] h-[14px]">
            <circle cx="7" cy="7" r="6" fill="#3f76bc" />
            <path d="M2 4Q6 0 8 4Q6 8 3 7ZM8 8Q11 5 12.5 8Q10 13 8 10ZM9 2L12 4L10 5Z" fill="#e8f0f8" />
          </svg>
        </button>
        <button aria-label="Cards">
          <svg viewBox="0 0 14 14" className="w-[14px] h-[14px]">
            <path d="M7 0.5L13 5.5L12 13H2L1 5.5Z" fill="#c01820" />
            <path d="M7 3.5Q11 7 9.5 9Q8.5 9.8 7.5 9L8.5 11H5.5L6.5 9Q5.5 9.8 4.5 9Q3 7 7 3.5Z" fill="#fff" />
          </svg>
        </button>
      </div>
      <button aria-label="Pro/ENGINEER" className="ml-3 w-[33px] h-[21px] flex items-center justify-center rounded-[2px] border border-[#dfe3e0] bg-[linear-gradient(135deg,#e8ebe9,#a4aba6_60%,#8e9690)]">
        <Icon name="cube" className="w-3 h-3" />
      </button>
      <button aria-label="Paint" className="ml-[2px] w-[33px] h-[21px] flex items-center justify-center rounded-[2px] border border-[#969e98] bg-[linear-gradient(135deg,#9ba49d,#5d665f_60%,#4b544d)]">
        <svg viewBox="0 0 14 14" className="w-[14px] h-[14px]">
          <path d="M1 8Q1 3 6 3Q11 3 11 8Q10 9 8 9Q8 12 5 12Q1 12 1 8Z" fill="#e6eef4" />
          <circle cx="4" cy="6" r="1" fill="#d03a2a" />
          <circle cx="7" cy="5.5" r="1" fill="#3a9a4a" />
          <circle cx="4" cy="9" r="1" fill="#2a6ad0" />
          <path d="M11.5 1V12" stroke="#d88a30" strokeWidth="2" />
        </svg>
      </button>
    </div>
    <div className="relative ml-auto flex items-center h-full">
      <svg viewBox="0 0 100 12" className="w-[100px] h-3 mr-[34px]" aria-hidden="true">
        <circle cx="7" cy="7" r="4" fill="#58a848" stroke="#d8ead0" />
        <circle cx="27" cy="7" r="4" fill="#4f9c40" />
        <circle cx="44" cy="7" r="4.5" fill="#e8b820" />
        <path d="M60 9 h7 M80 3 v6" stroke="#e4e8e4" strokeWidth="2" />
      </svg>
      <button aria-label="Show desktop" className="w-[10px] h-5 mr-px border border-[#8a938c] bg-[#4d564f]" />
      <p className="absolute right-5 -top-px whitespace-nowrap font-['DejaVu_Sans','Noto_Sans_CJK_SC',sans-serif] text-[15px] leading-5 font-bold text-white [text-shadow:1px_0_#e01818,-1px_0_#e01818,0_1px_#e01818,0_-1px_#e01818,1px_1px_#e01818,-1px_-1px_#e01818,1px_-1px_#e01818,-1px_1px_#e01818]">
        <span className="text-[18px]">三维网</span>www.3dportal.cn
      </p>
    </div>
  </footer>
);

const App = () => {
  return (
    <div className="h-screen flex flex-col overflow-hidden bg-[#dbe9f4] font-['Open_Sans','Noto_Sans_CJK_SC',sans-serif]">
      <TitleBar />
      <nav className="h-[25px] shrink-0 flex items-center gap-3 pl-[6px] pt-[3px] bg-[linear-gradient(#f4f8fc,#e4eef8)] text-[9px] text-[#22282e] whitespace-nowrap">
        {menus.map((menu) => (
          <button key={menu}>{menu}</button>
        ))}
      </nav>
      <div className="h-[46px] shrink-0 flex flex-col gap-px pt-[2px] border-t border-[#d0e0ec] bg-[#dbe9f3]">
        <ToolRow groups={topRow} />
        <ToolRow groups={bottomRow} />
      </div>
      <Dashboard />
      <div className="relative flex-1 min-h-0 flex">
        <ModelTree />
        <Canvas />
        <SketcherBar />
        <SelectDialog />
      </div>
      <Taskbar />
    </div>
  );
};

export default App;
